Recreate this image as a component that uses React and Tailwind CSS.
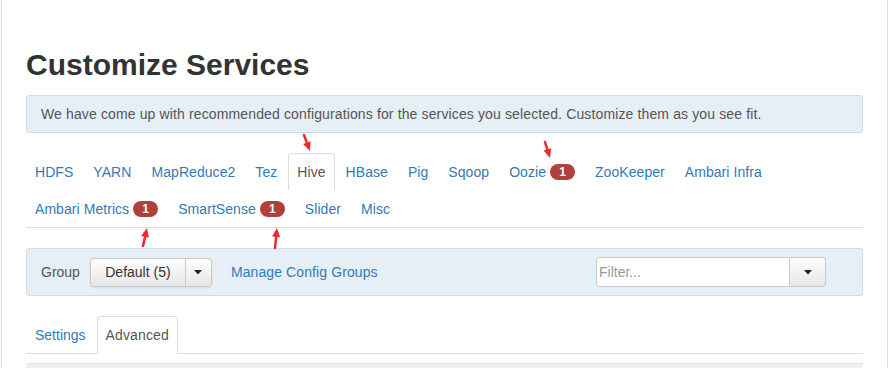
import React from 'react';

const rowOne = [
  { name: 'HDFS' },
  { name: 'YARN' },
  { name: 'MapReduce2' },
  { name: 'Tez' },
  { name: 'Hive', active: true },
  { name: 'HBase' },
  { name: 'Pig' },
  { name: 'Sqoop' },
  { name: 'Oozie', badge: 1 },
  { name: 'ZooKeeper' },
  { name: 'Ambari Infra' },
];

const rowTwo = [
  { name: 'Ambari Metrics', badge: 1 },
  { name: 'SmartSense', badge: 1 },
  { name: 'Slider' },
  { name: 'Misc' },
];

function Badge({ count }) {
  return (
    <span className="ml-[4px] inline-flex h-[16px] w-[25px] items-center justify-center rounded-[9px] bg-[#b0403b] text-[12px] font-bold leading-none text-white">
      {count}
    </span>
  );
}

function Tab({ tab }) {
  return (
    <li
      className={`mr-[2px] flex h-[37px] items-center rounded-t-[4px] border border-b-0 px-[8px] text-[14px] tracking-[0.06px] ${
        tab.active ? 'border-[#ddd] bg-white text-[#555]' : 'border-transparent text-[#337ab7]'
      }`}
    >
      {tab.name}
      {tab.badge && <Badge count={tab.badge} />}
    </li>
  );
}

function Caret() {
  return (
    <svg width="8" height="5" viewBox="0 0 8 5">
      <path d="M0 0 L8 0 L4 4.5 Z" fill="#222" />
    </svg>
  );
}

// red annotation arrow, tip at (tx, ty), tail at (sx, sy)
function Arrow({ sx, sy, tx, ty }) {
  const dx = tx - sx;
  const dy = ty - sy;
  const len = Math.sqrt(dx * dx + dy * dy);
  const ux = dx / len;
  const uy = dy / len;
  const bx = tx - ux * 9;
  const by = ty - uy * 9;
  const px = -uy * 4;
  const py = ux * 4;
  return (
    <svg className="pointer-events-none absolute left-0 top-0" width="889" height="368">
      <line x1={sx} y1={sy} x2={bx} y2={by} stroke="#ee2a2a" strokeWidth="2.5" strokeLinecap="round" />
      <polygon points={`${tx},${ty} ${bx + px},${by + py} ${bx - px},${by - py}`} fill="#ee2a2a" />
    </svg>
  );
}

export default function App() {
  return (
    <div className="relative h-[368px] w-[889px] overflow-hidden bg-white font-['Liberation_Sans',Arial,sans-serif]">
      <div className="ml-[1px] h-full w-[887px] border-x border-[#dcdcdc] pl-[24px] pr-[24px] pt-[48px]">
        <h2 className="text-[30px] font-bold leading-[33px] text-[#333]">Customize Services</h2>

        <div className="mt-[14px] flex h-[38px] items-center rounded-[3px] border border-[#cddde8] bg-[#e6eff5] px-[14px] text-[14px] tracking-[0.13px] text-[#555]">
          We have come up with recommended configurations for the services you selected. Customize them as you see fit.
        </div>

        <ul className="mt-[20px] border-b border-[#ddd]">
          <div className="flex">
            {rowOne.map((t) => (
              <Tab key={t.name} tab={t} />
            ))}
          </div>
          <div className="flex">
            {rowTwo.map((t) => (
              <Tab key={t.name} tab={t} />
            ))}
          </div>
        </ul>

        <div className="mt-[20px] flex h-[48px] items-center rounded-[3px] border border-[#cddde8] bg-[#e6eff5] pl-[14px] text-[14px]">
          <span className="text-[#555]">Group</span>
          <div className="ml-[10px] flex h-[29px] rounded-[4px] border border-[#c8c8c8] bg-gradient-to-b from-white to-[#e6e6e6] shadow-[0_1px_2px_rgba(0,0,0,0.08)]">
            <span className="flex w-[94px] items-center justify-center text-[#333]">Default (5)</span>
            <span className="flex w-[26px] items-center justify-center border-l border-[#ccc]">
              <Caret />
            </span>
          </div>
          <span className="ml-[19px] tracking-[0.1px] text-[#337ab7]">Manage Config Groups</span>
          <div className="ml-auto mr-[36px] flex h-[30px]">
            <div className="flex w-[194px] items-center rounded-l-[3px] border border-[#ccc] bg-white px-[2px] text-[#999]">
              Filter...
            </div>
            <span className="flex w-[36px] items-center justify-center rounded-r-[4px] border border-l-0 border-[#c8c8c8] bg-gradient-to-b from-white to-[#e6e6e6]">
              <Caret />
            </span>
          </div>
        </div>

        <ul className="mt-[20px] flex border-b border-[#ddd]">
          <li className="mr-[2px] flex h-[37px] items-center border border-b-0 border-transparent px-[8px] text-[14px] text-[#337ab7]">
            Settings
          </li>
          <li className="-mb-px flex h-[38px] items-center rounded-t-[4px] border border-b-0 border-[#ddd] bg-white px-[8px] text-[14px] tracking-[0.12px] text-[#555]">
            Advanced
          </li>
        </ul>

        <div className="mt-[9px] h-[20px] border-t border-[#e6e6e6] bg-[#f0f0f0]" />
      </div>

      <Arrow sx={304} sy={135} tx={310} ty={151} />
      <Arrow sx={545} sy={142} tx={550} ty={158} />
      <Arrow sx={143} sy={246} tx={147} ty={228} />
      <Arrow sx={275} sy={248} tx={277} ty={228} />
    </div>
  );
}
